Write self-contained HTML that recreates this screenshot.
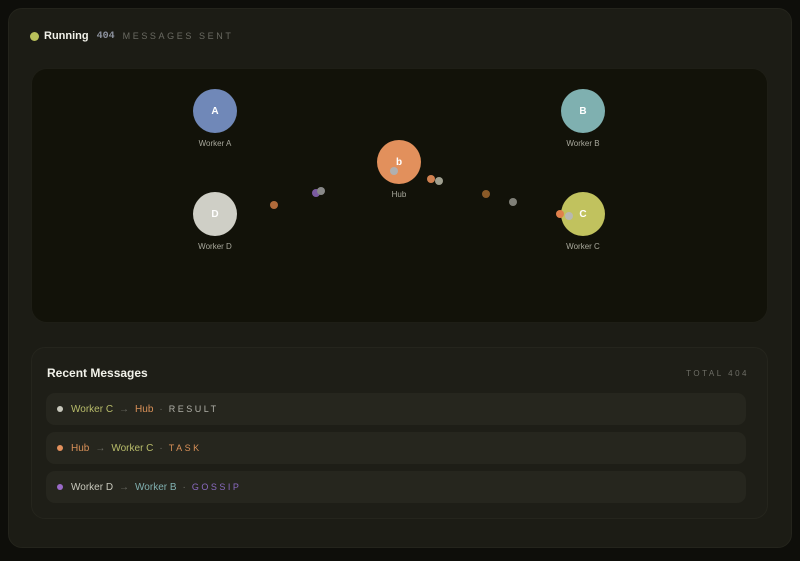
<!DOCTYPE html>
<html><head><meta charset="utf-8"><style>
*{margin:0;padding:0;box-sizing:border-box}
body{width:800px;height:561px;background:#0e0e0a;font-family:"Liberation Sans",sans-serif;position:relative;overflow:hidden}
.outer{position:absolute;left:8px;top:8px;width:784px;height:540px;background:#1c1c15;border-radius:14px;border:1px solid #24241c}
.hdr{position:absolute;left:30px;top:30px;display:flex;align-items:center;font-size:11px}
.dot{width:9px;height:9px;border-radius:50%;background:#b8c05a;margin-right:5px}
.graph{position:absolute;left:31px;top:68px;width:737px;height:255px;background:#121209;border-radius:16px;border:1px solid #1e1e16}
.node{position:absolute;width:44px;height:44px;border-radius:50%;color:#fff;font-size:10px;font-weight:bold;display:flex;align-items:center;justify-content:center}
.lbl{position:absolute;width:80px;text-align:center;font-size:8px;color:#a8a89c}
.p{position:absolute;border-radius:50%}
.msgs{position:absolute;left:31px;top:347px;width:737px;height:172px;background:#1e1e17;border-radius:14px;border:1px solid #25251d}
.row{position:absolute;left:15px;width:700px;height:32px;background:#26261e;border-radius:9px;display:flex;align-items:center;padding-left:11px;font-size:10px}
.row .d{width:6px;height:6px;border-radius:50%;margin-right:8px}
.sp{letter-spacing:2.5px;font-size:9px}
</style></head><body>
<div class="outer"></div>
<div class="hdr"><div class="dot"></div><b style="color:#f2f2ea;font-size:11px">Running</b><span style="color:#8e93a0;font-family:'Liberation Mono',monospace;font-weight:bold;font-size:10px;margin-left:8px">404</span><span style="color:#6a6a62;letter-spacing:2.6px;font-size:9px;margin-left:8px">MESSAGES SENT</span></div>
<div class="graph"></div>
<div class="node" style="left:193px;top:89px;background:#7088b8">A</div><div class="lbl" style="left:175px;top:139px">Worker A</div>
<div class="node" style="left:561px;top:89px;background:#7fb0b0">B</div><div class="lbl" style="left:543px;top:139px">Worker B</div>
<div class="node" style="left:377px;top:140px;background:#e2905c">b</div><div class="lbl" style="left:359px;top:190px">Hub</div>
<div class="node" style="left:193px;top:192px;background:#cfcfc6">D</div><div class="lbl" style="left:175px;top:242px">Worker D</div>
<div class="node" style="left:561px;top:192px;background:#c1c25e">C</div><div class="lbl" style="left:543px;top:242px">Worker C</div>
<div class="p" style="left:390px;top:167px;width:8px;height:8px;background:#b0b0b0"></div>
<div class="p" style="left:270px;top:201px;width:8px;height:8px;background:#b06a3a"></div>
<div class="p" style="left:312px;top:189px;width:8px;height:8px;background:#7a5aa0"></div>
<div class="p" style="left:317px;top:187px;width:8px;height:8px;background:#888"></div>
<div class="p" style="left:427px;top:175px;width:8px;height:8px;background:#d08050"></div>
<div class="p" style="left:435px;top:177px;width:8px;height:8px;background:#a0a090"></div>
<div class="p" style="left:482px;top:190px;width:8px;height:8px;background:#8a5a28"></div>
<div class="p" style="left:509px;top:198px;width:8px;height:8px;background:#808078"></div>
<div class="p" style="left:556px;top:210px;width:8px;height:8px;background:#e0804c"></div>
<div class="p" style="left:565px;top:212px;width:8px;height:8px;background:#b8b8b0"></div>
<div class="msgs"></div>
<div style="position:absolute;left:47px;top:366px;color:#f2f2ea;font-size:12px;font-weight:bold">Recent Messages</div>
<div style="position:absolute;right:51px;top:369px;color:#6e6e66;font-size:8px;letter-spacing:2.5px">TOTAL 404</div>
<div style="position:absolute;left:31px;top:347px;width:737px;height:172px">
<div class="row" style="top:46px"><div class="d" style="background:#c8c8bc"></div><span style="color:#b8bc6a">Worker C</span><span style="color:#6a6a62;margin:0 6px">→</span><span style="color:#d89058">Hub</span><span style="color:#6a6a62;margin:0 6px">·</span><span class="sp" style="color:#b0b0a8">RESULT</span></div>
<div class="row" style="top:85px"><div class="d" style="background:#e2905c"></div><span style="color:#d89058">Hub</span><span style="color:#6a6a62;margin:0 6px">→</span><span style="color:#b8bc6a">Worker C</span><span style="color:#6a6a62;margin:0 6px">·</span><span class="sp" style="color:#d89058">TASK</span></div>
<div class="row" style="top:124px"><div class="d" style="background:#9a6ac8"></div><span style="color:#c8c8bc">Worker D</span><span style="color:#6a6a62;margin:0 6px">→</span><span style="color:#80b0b0">Worker B</span><span style="color:#6a6a62;margin:0 6px">·</span><span class="sp" style="color:#8a6ac0">GOSSIP</span></div>
</div>
</body></html>
